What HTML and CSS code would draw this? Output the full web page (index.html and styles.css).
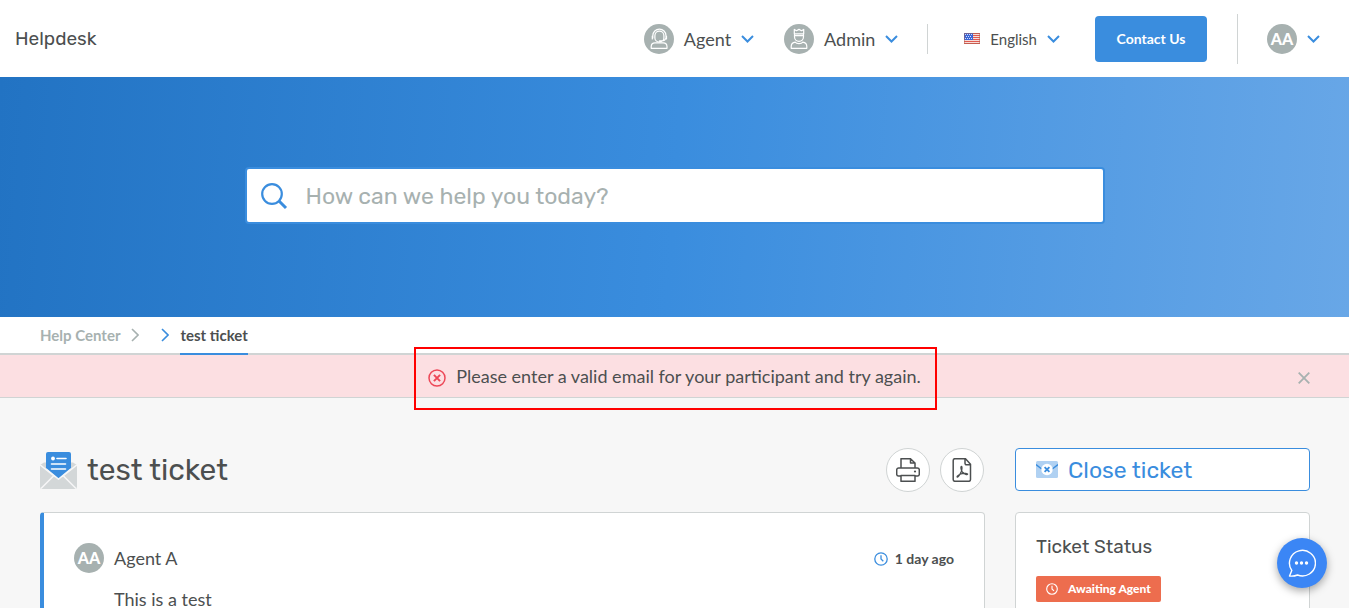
FILE: index.html
```html
<!DOCTYPE html>
<html lang="en">
<head>
<meta charset="utf-8">
<meta name="viewport" content="width=device-width, initial-scale=1">
<title>test ticket - Helpdesk</title>
<link rel="stylesheet" href="styles.css">
</head>
<body>
<svg class="sprite" aria-hidden="true">
  <symbol id="chevron-down" viewBox="0 0 13 8"><path d="M1 1l5.500 5.500L12 1" fill="none" stroke="currentColor" stroke-width="2"/></symbol>
  <symbol id="chevron-right" viewBox="0 0 8 14"><path d="M1 1l6 6-6 6" fill="none" stroke="currentColor" stroke-width="1.600"/></symbol>
  <symbol id="clock" viewBox="0 0 14 14"><circle cx="7" cy="7" r="6.200" fill="none" stroke="currentColor" stroke-width="1.300"/><path d="M7 3.300V7l2.300 2.300" fill="none" stroke="currentColor" stroke-width="1.300"/></symbol>
</svg>

<header class="topbar">
  <a class="brand" href="#">Helpdesk</a>
  <nav class="menu" aria-label="Main">
    <button class="menu-item" type="button">
      <svg class="avatar-icon" viewBox="0 0 30 30" aria-hidden="true">
        <circle cx="15" cy="15" r="15" fill="#a7b1b0"/>
        <g fill="none" stroke="#fff" stroke-width="1.200" stroke-linecap="round" stroke-linejoin="round">
          <path d="M8.800 14v-2.300a6.600 6.600 0 0 1 13.200 0V14M8.300 12v3M22.500 12v3"/>
          <path d="M10.900 14v-2.300a4.500 4.500 0 0 1 9 0V14a4.500 4 0 0 1-9 0zM21.500 14.500c0 1.600-1.500 2.300-4.500 2.300h-1.500"/>
          <path d="M7.200 24.300v-1.800a3.800 3.800 0 0 1 3.800-3.600h8.200a3.800 3.800 0 0 1 3.800 3.600v1.800z"/>
        </g>
      </svg>
      <span>Agent</span>
      <svg class="chevron-down" aria-hidden="true"><use href="#chevron-down"/></svg>
    </button>
    <button class="menu-item" type="button">
      <svg class="avatar-icon" viewBox="0 0 30 30" aria-hidden="true">
        <circle cx="15" cy="15" r="15" fill="#a7b1b0"/>
        <g fill="none" stroke="#fff" stroke-width="1.200" stroke-linecap="round" stroke-linejoin="round">
          <path d="M10.300 9.800V5.400l2.200 1.300 2.500-1.300 2.500 1.300 2.200-1.300v4.400zM10.500 9.800v3a4.500 4.500 0 0 0 9 0v-3M10.500 11.700h9"/>
          <path d="M7.200 24.300v-1.800c0-2.300 1.500-4 4-4.300 1.400 1.900 6.200 1.900 7.600 0 2.500.3 4 2 4 4.300v1.800z"/>
        </g>
      </svg>
      <span>Admin</span>
      <svg class="chevron-down" aria-hidden="true"><use href="#chevron-down"/></svg>
    </button>
  </nav>
  <div class="language">
    <button class="menu-item language-button" type="button">
      <svg class="flag" viewBox="0 0 16 11" aria-hidden="true">
        <path fill="#f7dcd8" d="M0 0h16v11H0z"/>
        <path stroke="#e05a50" d="M0 .5h16M0 2.500h16M0 4.500h16M0 6.500h16M0 8.500h16M0 10.500h16"/>
        <path fill="#3b66d6" d="M0 0h9v7H0z"/>
        <path stroke="#cfdcff" stroke-dasharray="1 1" d="M1 1.500h7M2 3.500h6M1 5.500h7"/>
        <path fill="none" stroke="#a8604f" stroke-opacity=".5" d="M.5.5h15v10H.5z"/>
      </svg>
      <span>English</span>
      <svg class="chevron-down" aria-hidden="true"><use href="#chevron-down"/></svg>
    </button>
  </div>
  <button class="contact" type="button">Contact Us</button>
  <div class="account">
    <button class="menu-item" type="button" aria-label="Account menu">
      <span class="initials">AA</span>
      <svg class="chevron-down" aria-hidden="true"><use href="#chevron-down"/></svg>
    </button>
  </div>
</header>

<section class="hero">
  <form class="search" role="search">
    <svg class="search-icon" viewBox="0 0 28 28" aria-hidden="true"><circle cx="12" cy="12" r="9.800" fill="none" stroke="#3a8dde" stroke-width="2.200"/><path d="M19 19l7 7" stroke="#3a8dde" stroke-width="3"/></svg>
    <input class="search-input" type="search" aria-label="Search" placeholder="How can we help you today?">
  </form>
</section>

<nav class="breadcrumbs" aria-label="Breadcrumb">
  <a class="crumb" href="#">Help Center</a>
  <svg class="chevron-right" aria-hidden="true"><use href="#chevron-right"/></svg>
  <svg class="chevron-right chevron-active" aria-hidden="true"><use href="#chevron-right"/></svg>
  <a class="crumb crumb-active" href="#" aria-current="page">test ticket</a>
</nav>

<div class="alert" role="alert">
  <p class="alert-message">
    <svg class="alert-icon" viewBox="0 0 18 18" aria-hidden="true"><g fill="none" stroke="#ed4757"><circle cx="9" cy="9" r="8" stroke-width="1.500"/><path d="M5.900 5.900l6.200 6.200M12.100 5.900l-6.200 6.200" stroke-width="2"/></g></svg>
    <span>Please enter a valid email for your participant and try again.</span>
  </p>
  <button class="alert-close" type="button" aria-label="Dismiss"><svg class="close-icon" viewBox="0 0 12 12" aria-hidden="true"><path d="M.7.7l10.600 10.600M11.300.7L.7 11.300" stroke="#a7b1b0" stroke-width="1.800"/></svg></button>
</div>

<main class="content">
  <section class="ticket">
    <div class="ticket-head">
      <svg class="ticket-icon" viewBox="0 0 37 37" aria-hidden="true">
        <path d="M0 13l4-2.500h29l4 2.500v22a2 2 0 0 1-2 2H2a2 2 0 0 1-2-2z" fill="#d3d7d8"/>
        <path d="M0 12.800l15 11.800M37 12.800L22 24.600M1 36.500l13-13 4.500 3.600 4.500-3.600 13 13" fill="none" stroke="#f7f7f7" stroke-width="1.500"/>
        <path d="M6 2a2 2 0 0 1 2-2h21a2 2 0 0 1 2 2v14.500L18.500 27 6 16.500z" fill="#3a8dde"/>
        <path d="M6 16.800L18.500 27 31 16.800" fill="none" stroke="#f7f7f7" stroke-width="1.300"/>
        <circle cx="13" cy="6.500" r="1.900" fill="#fff"/>
        <path d="M17 6.500h9M11.500 12h14M11.500 17h14" stroke="#fff" stroke-width="1.600" stroke-linecap="round"/>
      </svg>
      <h1 class="ticket-title">test ticket</h1>
      <button class="round" type="button" aria-label="Print">
        <svg class="round-icon" viewBox="0 0 24 24" aria-hidden="true"><g fill="none" stroke="#4c4f50" stroke-width="1.500" stroke-linejoin="round"><path d="M5 10V.7h9.500L19 5v5M14.500.7V5H19M5 18H2.500A1.800 1.800 0 0 1 .7 16.200V12a2 2 0 0 1 2-2h18.600a2 2 0 0 1 2 2v4.200a1.800 1.800 0 0 1-1.800 1.800H19M5 17.500h14v5.800H5z"/></g><circle cx="19" cy="13.500" r="1.100" fill="#4c4f50"/></svg>
      </button>
      <button class="round" type="button" aria-label="Download PDF">
        <svg class="round-icon" viewBox="0 0 24 24" aria-hidden="true"><g fill="none" stroke="#4c4f50" stroke-width="1.500" stroke-linejoin="round"><path d="M5 .7h10.500l5 5.500v15.300a1.800 1.800 0 0 1-1.800 1.800H5a1.800 1.800 0 0 1-1.800-1.800v-19A1.800 1.800 0 0 1 5 .7zM15 .7v4.600a1.500 1.500 0 0 0 1.500 1.500h4"/><path d="M11.500 8.500c-1 0-.6 3.300.8 5.300 1.400 1.900 4.800 3.500 5.300 2.500.4-.9-3.300-1.200-5.600-.6-2.600.6-5.300 2.400-5 3.200.7 1 2.900-2.100 4.100-4.900.9-2.300 1.200-5.500.4-5.500z" stroke-width="1.300"/></g></svg>
      </button>
    </div>
    <article class="card post">
      <div class="post-head">
        <span class="initials">AA</span>
        <span class="author">Agent A</span>
        <span class="posted"><svg class="clock" aria-hidden="true"><use href="#clock"/></svg><time>1 day ago</time></span>
      </div>
      <p class="post-body">This is a test</p>
    </article>
  </section>

  <aside class="sidebar">
    <button class="close-ticket" type="button">
      <svg class="close-ticket-icon" viewBox="0 0 22 17" aria-hidden="true"><rect width="22" height="17" rx="1.500" fill="#b0d1f2"/><path d="M0 3.500L7 9M22 3.500L15 9" stroke="#3a8dde" stroke-width="1.400"/><circle cx="11" cy="8.500" r="5.700" fill="#fff"/><path d="M8.600 6.100l4.800 4.800M13.400 6.100l-4.800 4.800" stroke="#3a8dde" stroke-width="1.800"/></svg>
      <span>Close ticket</span>
    </button>
    <section class="card status">
      <h2 class="status-title">Ticket Status</h2>
      <span class="badge"><svg class="badge-icon" aria-hidden="true"><use href="#clock"/></svg><span>Awaiting Agent</span></span>
    </section>
  </aside>
</main>

<button class="chat" type="button" aria-label="Open chat">
  <svg class="chat-icon" viewBox="0 0 28 28" aria-hidden="true"><path d="M1.500 27l2.300-5.500A13 12.800 0 1 1 9.500 26C7 27 4 27.300 1.500 27z" fill="none" stroke="#fff" stroke-width="1.400" stroke-linejoin="round"/><g fill="#fff"><circle cx="8.500" cy="14" r="1.700"/><circle cx="13.500" cy="14" r="1.700"/><circle cx="18.500" cy="14" r="1.700"/></g></svg>
</button>
</body>
</html>
```
FILE: styles.css
```css
:root {
  --blue: #3a8dde;
  --grey: #a7b1b0;
  --line: #d0d4d4;
  --text: #4c4f50;
  --heading: Rubik, Inter, sans-serif;
}

* { box-sizing: border-box; }

body {
  display: flex;
  flex-direction: column;
  height: 100vh;
  margin: 0;
  overflow: hidden;
  background: #f7f7f7;
  color: var(--text);
  font: 18px/24px Lato, sans-serif;
}

button { padding: 0; border: 0; background: none; color: inherit; font: inherit; cursor: pointer; }
a { color: inherit; text-decoration: none; }
h1, h2, p { margin: 0; }
svg { flex: none; }

.sprite { position: absolute; width: 0; height: 0; }

.topbar {
  display: flex;
  flex: none;
  align-items: center;
  height: 77px;
  padding: 0 29px 0 15px;
  background: #fff;
}
.brand { margin-right: auto; font: 400 19px/24px var(--heading); }
.menu { display: flex; gap: 30px; padding-right: 29px; }
.menu-item { display: flex; align-items: center; gap: 10px; }
.avatar-icon { width: 30px; height: 30px; }
.chevron-down { width: 13px; height: 8px; color: var(--blue); }
.language { display: flex; height: 30px; padding: 0 35px 0 36px; border-left: 1px solid var(--line); }
.language-button { font-size: 15px; }
.flag { width: 16px; height: 11px; }
.contact {
  min-width: 112px;
  height: 46px;
  padding: 0 20px;
  border-radius: 4px;
  background: var(--blue);
  color: #fff;
  font-size: 14px;
  font-weight: 700;
}
.account { display: flex; height: 50px; margin-left: 30px; padding-left: 29px; border-left: 1px solid var(--line); }
.initials {
  width: 30px;
  height: 30px;
  border-radius: 50%;
  background: var(--grey);
  color: #fff;
  font-size: 16px;
  font-weight: 900;
  line-height: 30px;
  text-align: center;
}

.hero {
  display: flex;
  flex: none;
  align-items: center;
  justify-content: center;
  height: 240px;
  padding: 0 24px 4px;
  background: linear-gradient(94deg, #2273c3 0%, #3a8dde 50%, #68a7e7 100%);
}
.search {
  display: flex;
  align-items: center;
  gap: 18px;
  width: 860px;
  height: 57px;
  padding: 1px 13px 0;
  border: 2px solid var(--blue);
  border-radius: 4px;
  background: #fff;
}
.search-icon { width: 28px; height: 28px; }
.search-input { flex: 1; min-width: 0; padding: 0; border: 0; outline: 0; background: none; font: 400 23px/30px var(--heading); }
.search-input::placeholder { color: var(--grey); opacity: 1; }

.breadcrumbs {
  display: flex;
  flex: none;
  align-items: center;
  height: 38px;
  padding: 0 40px;
  border-bottom: 2px solid var(--line);
  background: #fff;
  font-size: 15px;
  font-weight: 700;
}
.crumb { color: var(--grey); }
.crumb-active { align-self: stretch; height: 38px; border-bottom: 2px solid var(--blue); color: var(--text); line-height: 36px; }
.chevron-right { width: 8px; height: 14px; margin: 0 11px; color: var(--grey); }
.chevron-active { color: var(--blue); }

.alert {
  display: flex;
  position: relative;
  z-index: 1;
  flex: none;
  align-items: center;
  justify-content: center;
  height: 43px;
  border-bottom: 1px solid var(--line);
  background: #fcdfe2;
}
.alert-message { display: flex; position: relative; align-items: center; gap: 10px; }
.alert-message::after {
  position: absolute;
  inset: -17px -16px -22px -14px;
  border: 2px solid #f00;
  content: "";
}
.alert-icon { width: 18px; height: 18px; margin-top: 3px; }
.alert-close { display: flex; position: absolute; right: 39px; margin-top: 3px; }
.close-icon { width: 12px; height: 12px; }

.content {
  display: grid;
  grid-template-columns: minmax(0, 1fr) 295px;
  gap: 30px;
  flex: 1;
  min-height: 0;
  padding: 50px 39px 0 40px;
}
.ticket-head { display: flex; align-items: center; gap: 10px; height: 44px; margin-bottom: 20px; padding-right: 1px; }
.ticket-icon { width: 37px; height: 37px; }
.ticket-title { margin-right: auto; font: 400 30px/36px var(--heading); }
.round {
  display: flex;
  align-items: center;
  justify-content: center;
  width: 44px;
  height: 44px;
  border: 1px solid var(--line);
  border-radius: 50%;
  background: #fff;
}
.round-icon { width: 24px; height: 24px; }
.card { min-height: 240px; border: 1px solid var(--line); border-radius: 4px; background: #fff; }
.post { padding: 30px; border-left: 4px solid var(--blue); }
.post-head { display: flex; align-items: center; gap: 10px; }
.author { margin-right: auto; }
.posted { display: flex; align-items: center; gap: 7px; padding-top: 2px; font-size: 14px; font-weight: 700; }
.clock { width: 14px; height: 14px; color: var(--blue); }
.post-body { padding: 14px 0 0 40px; }

.close-ticket {
  display: flex;
  align-items: center;
  gap: 10px;
  width: 100%;
  height: 43px;
  margin-bottom: 21px;
  padding: 0 20px;
  border: 1px solid var(--blue);
  border-radius: 4px;
  background: #fff;
  color: var(--blue);
  font: 400 23px/30px var(--heading);
}
.close-ticket-icon { width: 22px; height: 17px; }
.status { padding: 22px 20px; }
.status-title { margin-bottom: 17px; font: 400 19px/24px var(--heading); }
.badge {
  display: inline-flex;
  align-items: center;
  gap: 10px;
  height: 26px;
  padding: 0 10px;
  border-radius: 2px;
  background: #ed6d4e;
  color: #fff;
  font-size: 12px;
  font-weight: 900;
}
.badge-icon { width: 12px; height: 12px; }

.chat {
  display: flex;
  position: fixed;
  right: 22px;
  bottom: 20px;
  z-index: 2;
  align-items: center;
  justify-content: center;
  width: 50px;
  height: 50px;
  border-radius: 50%;
  background: #3b86f5;
  box-shadow: 0 3px 9px rgba(0, 0, 0, .35);
}
.chat-icon { width: 28px; height: 28px; }
```
